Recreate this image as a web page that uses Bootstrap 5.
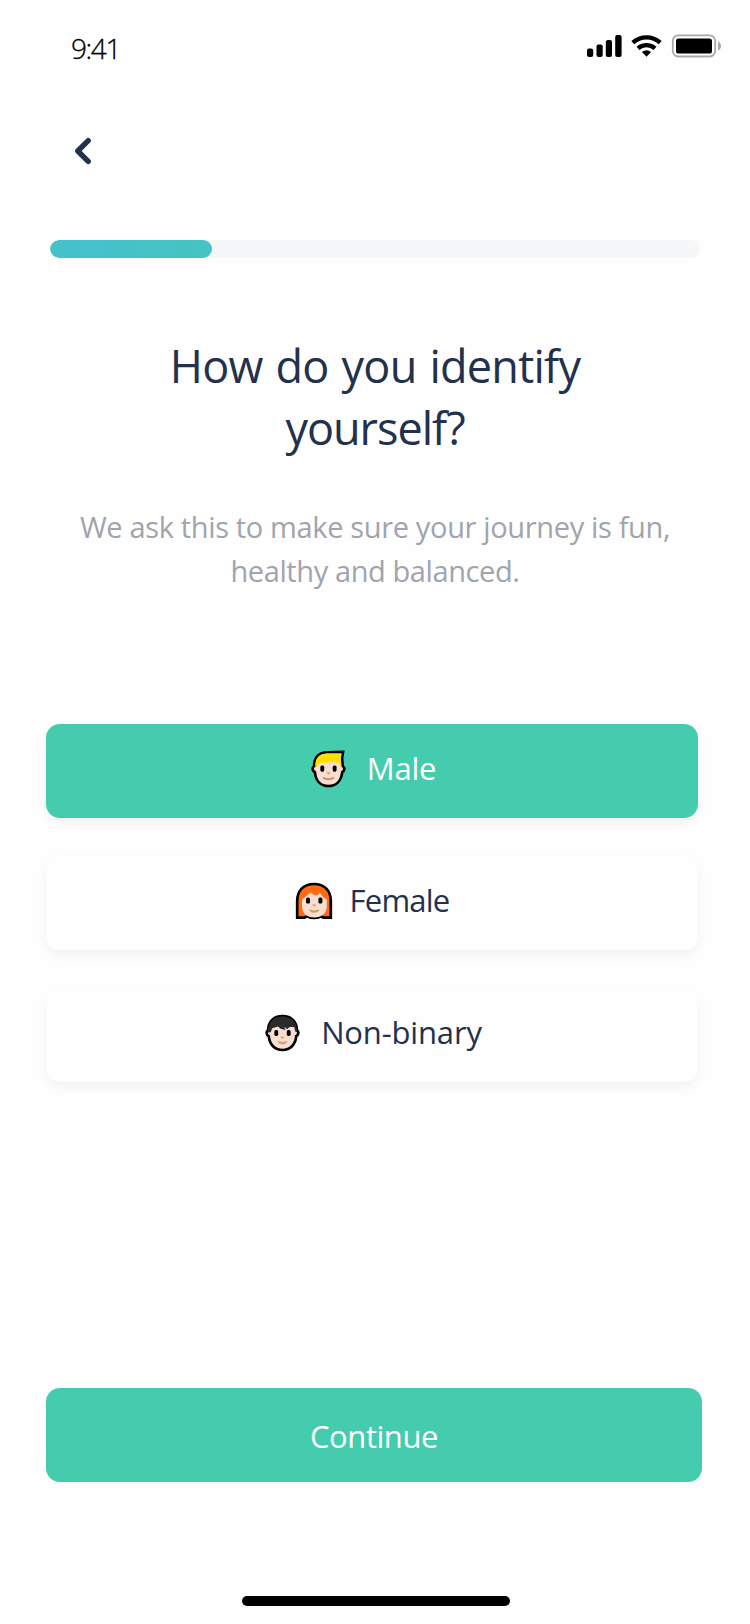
<!DOCTYPE html>
<html lang="en">
<head>
<meta charset="utf-8">
<meta name="viewport" content="width=device-width, initial-scale=1">
<title>How do you identify yourself?</title>
<link href="https://cdn.jsdelivr.net/npm/bootstrap@5.3.0/dist/css/bootstrap.min.css" rel="stylesheet">
<style>
  body { background: #fefefe; color: #23314c; font-family: "Open Sans", "Noto Sans", sans-serif; }
  .screen { width: 750px; height: 1624px; overflow: hidden; }
  .status { height: 94px; padding: 0 29px 0 71px; color: #000; }
  .clock { font-size: 28px; line-height: 40px; font-weight: 300; letter-spacing: -1.4px; margin-top: 28px; -webkit-text-stroke: .3px #000; }
  .status svg { margin-top: 33px; }
  .back { width: 40px; height: 40px; margin: 37px 0 0 63px; }
  .steps { height: 18px; margin: 69px 50px 0; border-radius: 9px; background: #f6f7f9; }
  .steps .progress-bar { border-radius: 9px; background: linear-gradient(90deg, #45c1cd, #45c4c2); }
  .title { font-size: 45px; line-height: 62px; font-weight: 400; margin: 77px 0 0; }
  .t1 { letter-spacing: -.75px; word-spacing: 2px; }
  .t2 { letter-spacing: -1px; }
  .intro { font-size: 29px; line-height: 44px; color: #a1a4ac; margin: 46px 0 0; }
  .i1 { letter-spacing: -.35px; }
  .i2 { letter-spacing: -.4px; }
  .choices { margin: 131px 52px 0 46px; gap: 38px; }
  .choice { height: 94px; border: 0; border-radius: 14px; background: #fefefe; color: #23314c; font-size: 31px; line-height: 44px;
    box-shadow: 0 5px 12px rgba(0,0,0,.05); padding: 0 0 4px; }
  .choice.active, .choice.active:hover { background: #45ccaf; color: #fff; }
  .choice svg { flex: none; }
  .choice span { margin-bottom: 2px; }
  .c1 { letter-spacing: -.2px; }
  .c2 { letter-spacing: -.8px; }
  .c3 { letter-spacing: -.15px; }
  .go { height: 94px; margin: 306px 48px 0 46px; border: 0; border-radius: 14px; background: #45ccaf; color: #fff; font-size: 31px; letter-spacing: -.45px; line-height: 44px; padding: 2px 0 0; }
  .home { width: 268px; height: 10px; border-radius: 5px; background: #000; margin: 114px 0 0 242px; }
</style>
</head>
<body>
<main class="screen d-flex flex-column">
  <header class="status d-flex justify-content-between align-items-start">
    <span class="clock">9:41</span>
    <svg width="135" height="26" viewBox="586 33 135 26" aria-hidden="true">
      <rect x="587" y="48.5" width="6.2" height="8.5" rx="2"/><rect x="596.5" y="44.5" width="6.2" height="12.5" rx="2"/>
      <rect x="605.8" y="40" width="6.2" height="17" rx="2"/><rect x="615.2" y="35" width="6.4" height="22" rx="2"/>
      <path d="M632.8 42.6a20.5 20.5 0 0 1 27.4 0M638 48.3a13 13 0 0 1 17 0" fill="none" stroke="#000" stroke-width="4.4"/>
      <path d="M641.9 52a7.3 7.3 0 0 1 9.2 0l-4.6 4.8z"/>
      <rect x="672.8" y="35.3" width="42.4" height="21.2" rx="5.5" fill="none" stroke="#a9a9a9" stroke-width="1.8"/>
      <rect x="676" y="38.5" width="36" height="15" rx="2.6"/><path d="M718 41.5q3 1.3 3 4.5t-3 4.5z" fill="#a9a9a9"/>
    </svg>
  </header>

  <button class="back btn p-0 border-0 d-flex" aria-label="Back">
    <svg width="40" height="40" viewBox="63 131 40 40"><path d="M88.2 140.7 77.8 151l10.400 10.300" fill="none" stroke="#23314c" stroke-width="5.400" stroke-linecap="round" stroke-linejoin="round"/></svg>
  </button>

  <div class="progress steps flex-shrink-0" role="progressbar" aria-valuenow="25" aria-valuemin="0" aria-valuemax="100">
    <div class="progress-bar" style="width:24.92%"></div>
  </div>

  <h1 class="title text-center"><span class="t1">How do you identify</span><br><span class="t2">yourself?</span></h1>
  <p class="intro text-center"><span class="i1">We ask this to make sure your journey is fun,</span><br><span class="i2">healthy and balanced.</span></p>

  <div class="choices d-flex flex-column">
    <button class="choice btn active d-flex align-items-center justify-content-center" style="padding-left:3px">
      <svg width="35" height="38" viewBox="0 0 36 38" style="margin-right:21px">
        <path d="M3.2 16C3.2 7 8 1.800 17 1.800L33 1.400 32 7.500 32.600 16q1.900 1 1.700 3-.3 2.500-2.200 3.200C31.200 31 26 36.500 18 36.500S4.800 31 4 22.200Q1.700 21.200 1.700 18.700 1.700 16.700 3.200 16z" fill="#f8ddd0" stroke="#000" stroke-width="2.700"/>
        <path d="M4.500 14.500C4.800 7.500 9 3.100 17 3.100h14.500L30.600 7.500l.7 9.300-1.600-1.200-.8-3.800-2.400.9-2.300-1.500-5.400 1.300.8-1.800-4 2-6.300-.2L5.600 17z" fill="#ffdf00"/>
        <rect x="9.600" y="15.500" width="4" height="6.200" rx="1.600"/><rect x="22.300" y="15.500" width="4" height="6.200" rx="1.600"/>
        <path d="M15.600 22.300h4.800l-2.400 2.500z" fill="#d5a06f"/><path d="M12.300 27q5.700 3 11.400 0v2q-5.700 3-11.400 0z" fill="#c49560"/>
      </svg>
      <span class="c1">Male</span>
    </button>
    <button class="choice btn d-flex align-items-center justify-content-center">
      <svg width="38" height="38" viewBox="0 0 38 38" style="margin-right:17px">
        <path d="M2.200 35.700V19C2.200 8 9 2 19 2s16.800 6 16.800 17v16.700h-7.500l-2.200-1.500q-7 3.500-14.200 0L9.600 35.700z" fill="#ff6a12" stroke="#000" stroke-width="2.700"/>
        <path d="M7 17.500 11.500 14l4.300-3.500q6 6 8.800.3l3 4 4.200 2.700v7.800C31 32 26.500 35.500 19.400 35.500S7.500 32 7 25z" fill="#f8ddd0"/>
        <rect x="11" y="15.500" width="4" height="6" rx="1.600"/><rect x="23.400" y="15.500" width="4" height="6" rx="1.600"/>
        <path d="M16.800 22.500h4.800l-2.400 2.300z" fill="#d5a06f"/><path d="M14.300 27.200q5 2 10 0-.4 3.600-5 3.600t-5-3.600z" fill="#c9a26e"/>
      </svg>
      <span class="c2">Female</span>
    </button>
    <button class="choice btn d-flex align-items-center justify-content-center" style="padding-left:3px">
      <svg width="35" height="38" viewBox="0 0 36 38" style="margin-right:21px">
        <path d="M3.200 16C3.300 7 9 1.700 18 1.700S32.700 7 32.800 16q1.700 1 1.500 3-.3 2.500-2.200 3.200C31.400 31 26 36.500 18 36.500S4.600 31 3.900 22.200Q1.700 21.200 1.600 18.700 1.600 16.700 3.200 16z" fill="#f8ddd0" stroke="#000" stroke-width="2.700"/>
        <path d="M3 18.500C2.500 8 8.500 2 18 2s15.500 6 15 16.500l-1.800-1-1.200-4.600-4.700-.2-2.600 2.500-2.700-2.700 1 3.500-5-1.300-2.600-2.300-6 1.600-1.500 4.300z" fill="#2a2a2a"/>
        <rect x="9.600" y="16" width="4" height="6" rx="1.600"/><rect x="22.400" y="16" width="4" height="6" rx="1.600"/>
        <path d="M15.600 22.800h4.800l-2.400 2.300z" fill="#d5a06f"/><path d="M13 27q5 2 10 0-.5 3.800-5 3.800T13 27z" fill="#d3a66e"/>
      </svg>
      <span class="c3">Non-binary</span>
    </button>
  </div>

  <button class="go btn">Continue</button>
  <div class="home flex-shrink-0"></div>
</main>
<script src="https://cdn.jsdelivr.net/npm/bootstrap@5.3.0/dist/js/bootstrap.bundle.min.js"></script>
</body>
</html>
